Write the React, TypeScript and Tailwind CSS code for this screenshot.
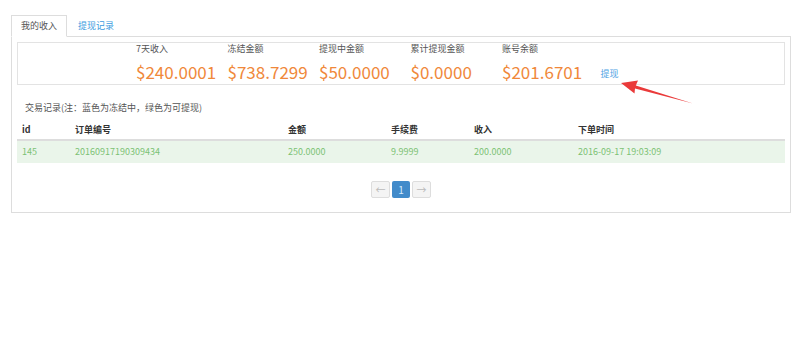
const stats = [
  { label: "7天收入", value: "$240.0001" },
  { label: "冻结金额", value: "$738.7299" },
  { label: "提现中金额", value: "$50.0000" },
  { label: "累计提现金额", value: "$0.0000" },
  { label: "账号余额", value: "$201.6701" },
];

const cols = ["id", "订单编号", "金额", "手续费", "收入", "下单时间"];
const row = ["145", "20160917190309434", "250.0000", "9.9999", "200.0000", "2016-09-17 19:03:09"];

const grid = "grid grid-cols-[53px_213px_103px_83px_104px_1fr]";

const App = () => {
  return (
    <div
      className="relative w-[800px] h-[340px] bg-white text-[9px] text-[#555]"
      style={{ fontFamily: '"Noto Sans CJK SC", "Noto Sans", sans-serif' }}
    >
      <div className="ml-[11px] w-[780px] pt-[15px]">
        {/* tabs */}
        <div className="flex border-b border-[#ddd]">
          <div className="-mb-px h-[22px] px-[9px] flex items-center border border-[#ddd] border-b-white bg-white text-[#555]">
            我的收入
          </div>
          <div className="ml-[2px] h-[21px] px-[9px] flex items-center text-[#3b9be0]">
            提现记录
          </div>
        </div>

        <div className="border-x border-b border-[#ddd] px-[5px] pt-[5px] pb-[14px]">
          {/* summary box */}
          <div className="flex border border-[#e3e3e3] pl-[118px]">
            {stats.map((s) => (
              <div key={s.label} className="w-[91.5px] shrink-0">
                <div className="leading-[12px] text-[#555]">{s.label}</div>
                <div className="mt-[5px] text-[17px] leading-[24px] text-[#f0883a]">
                  {s.value}
                </div>
              </div>
            ))}
            <div className="ml-[7px] flex items-end pb-[4px] text-[#4ea3e3]">提现</div>
          </div>

          <div className="mt-[17px] pl-[8px] leading-[12px]">
            交易记录(注：蓝色为冻结中，绿色为可提现)
          </div>

          {/* table */}
          <div className="mt-[6px]">
            <div className={`${grid} border-b-2 border-[#ddd] font-bold text-[#333]`}>
              {cols.map((c) => (
                <div key={c} className="px-[5px] pt-[4px] pb-[3px] leading-[12px]">
                  {c}
                </div>
              ))}
            </div>
            <div className={`${grid} bg-[#eaf5ea] text-[#7cc274]`}>
              {row.map((c, i) => (
                <div key={i} className="px-[5px] py-[5px] leading-[12px]">
                  {c}
                </div>
              ))}
            </div>
          </div>

          {/* pagination */}
          <div className="mt-[18px] flex justify-center gap-[2px]">
            <div className="w-[19px] h-[17px] flex items-center justify-center rounded-[2px] border border-[#ddd] bg-[#f4f4f4] text-[#bbb] text-[10px]">
              ←
            </div>
            <div className="w-[18px] h-[17px] flex items-center justify-center rounded-[2px] bg-[#428bca] text-[#d6ecff] text-[10px]">
              1
            </div>
            <div className="w-[19px] h-[17px] flex items-center justify-center rounded-[2px] border border-[#ddd] bg-[#f4f4f4] text-[#bbb] text-[10px]">
              →
            </div>
          </div>
        </div>
      </div>

      {/* annotation arrow */}
      <svg
        className="absolute left-0 top-0 pointer-events-none"
        width="800"
        height="340"
        viewBox="0 0 800 340"
      >
        <polygon
          points="621,83 638,80.5 635.8,85.6 693,103.5 635,88.6 634.5,93.5"
          fill="#ea3a3a"
        />
      </svg>
    </div>
  );
};

export default App;
